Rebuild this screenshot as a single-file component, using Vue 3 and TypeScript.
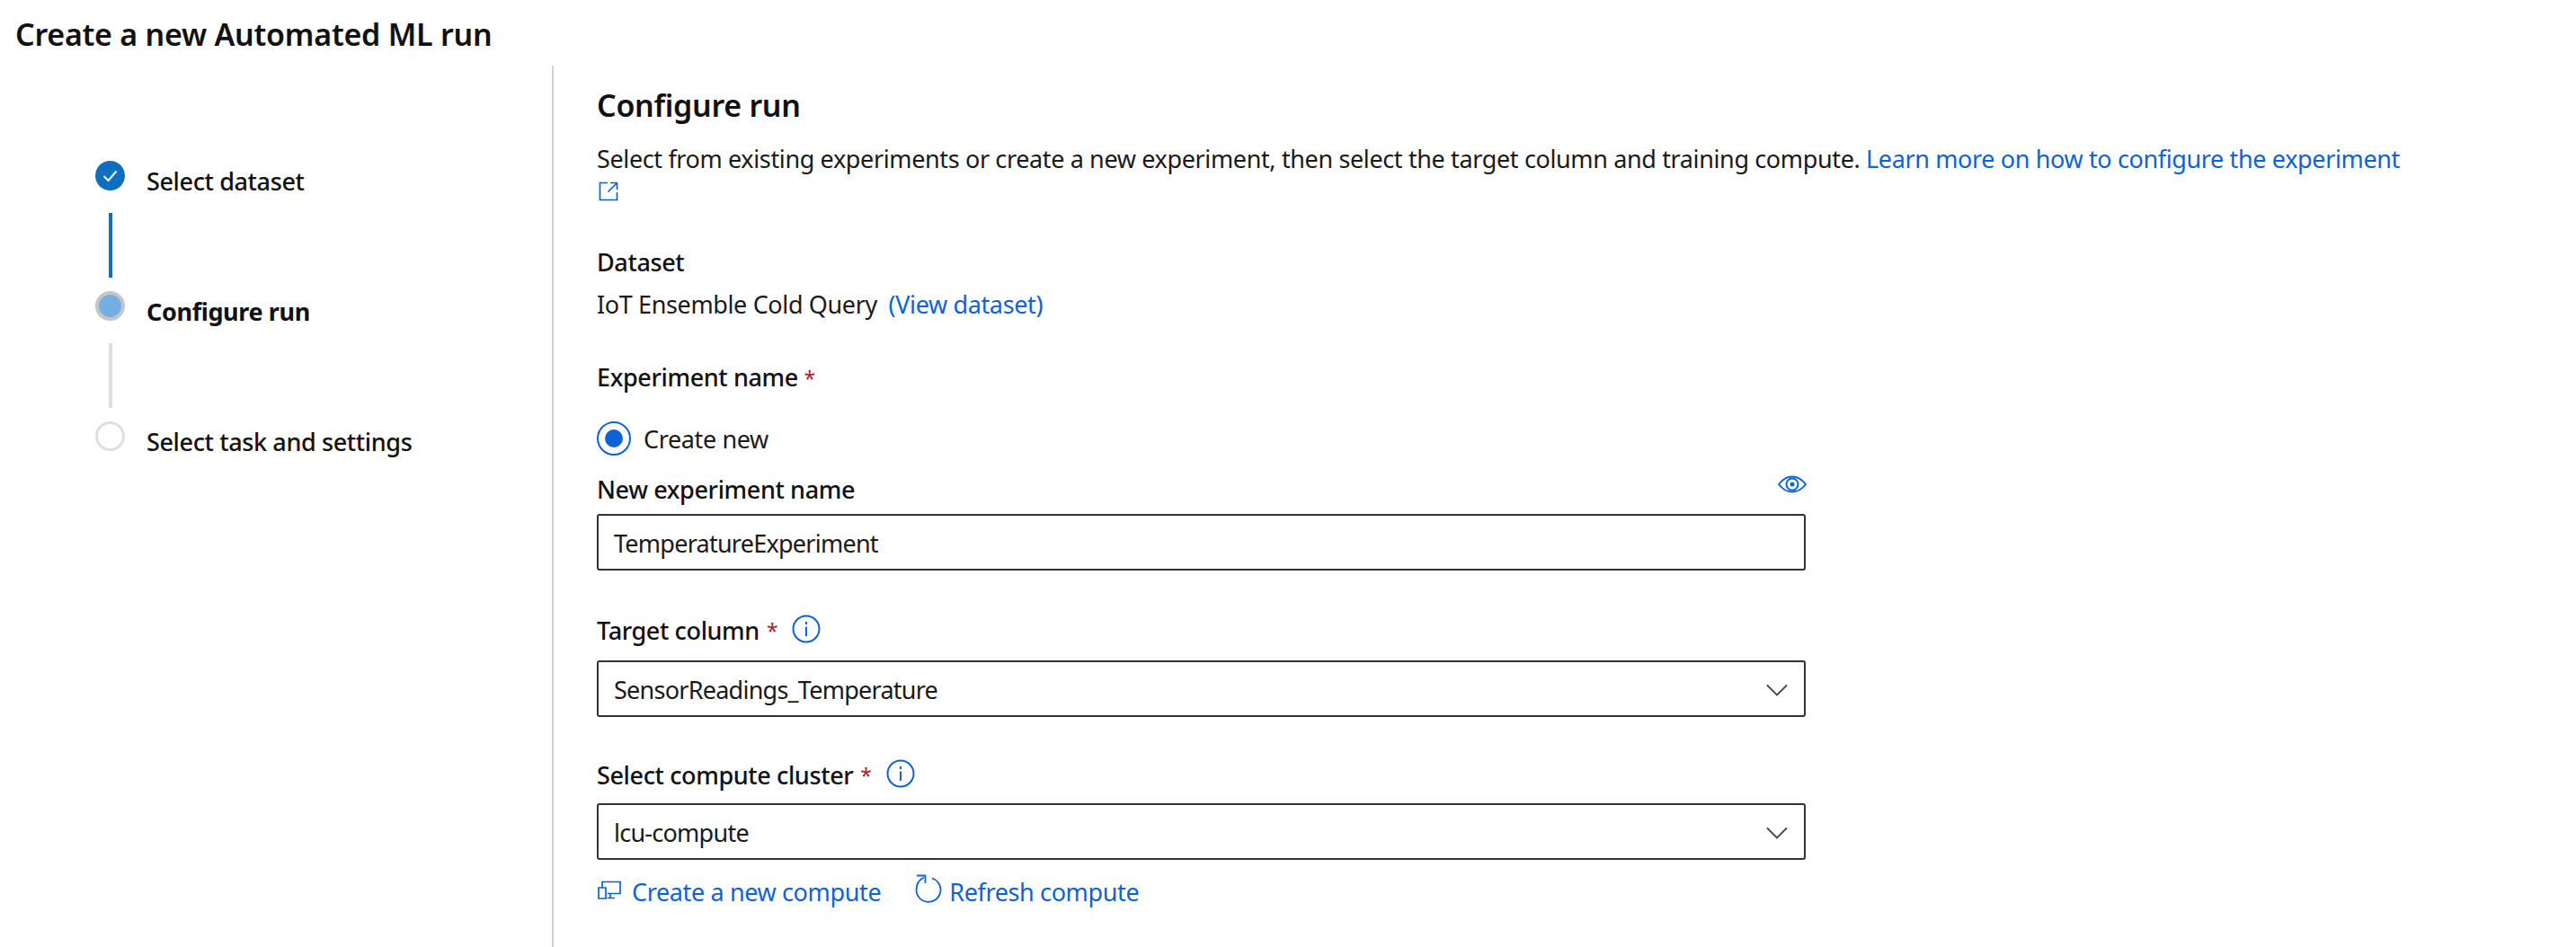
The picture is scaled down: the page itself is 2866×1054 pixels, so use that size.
<script setup lang="ts">
interface Step { label: string; state: 'done' | 'current' | 'todo' }
const steps: Step[] = [
  { label: 'Select dataset', state: 'done' },
  { label: 'Configure run', state: 'current' },
  { label: 'Select task and settings', state: 'todo' },
]
</script>

<template>
  <div class="page">
    <h1 class="title">Create a new Automated ML run</h1>
    <div class="body">
      <aside class="rail">
        <div v-for="(s, i) in steps" :key="s.label" class="step">
          <div class="marker">
            <span class="dot" :class="s.state">
              <svg v-if="s.state === 'done'" width="33" height="33" viewBox="0 0 33 33"><path d="M9.5 17l5 5 9-10.500" fill="none" stroke="#e4eef8" stroke-width="2.200"/></svg>
            </span>
            <span v-if="i < steps.length - 1" class="conn" :class="{ on: s.state === 'done' }"></span>
          </div>
          <span class="step-label" :class="{ strong: s.state === 'current' }">{{ s.label }}</span>
        </div>
      </aside>
      <main class="main">
        <h2 class="heading">Configure run</h2>
        <p class="desc">Select from existing experiments or create a new experiment, then select the target column and training compute. <a class="link">Learn more on how to configure the experiment</a>
          <svg class="ext" width="22" height="22" viewBox="0 0 22 22"><path d="M10 1.500H1.500v19h19V12M13 1.500h7.500v7.500M20.500 1.500L10.500 11.500" fill="none" stroke="#0f62d6" stroke-width="1.700"/></svg>
        </p>
        <div class="label dataset">Dataset</div>
        <div class="value">IoT Ensemble Cold Query <a class="link view">(View dataset)</a></div>
        <div class="label expname">Experiment name <span class="req">*</span></div>
        <div class="radio-row">
          <span class="radio"><span class="radio-in"></span></span>
          <span>Create new</span>
        </div>
        <div class="newname">
          <span class="label">New experiment name</span>
          <svg class="eye" width="32" height="20" viewBox="0 0 32 20"><path d="M1 10C6 3.500 11 1.500 16 1.500S26 3.500 31 10C26 16.500 21 18.500 16 18.500S6 16.500 1 10Z" fill="none" stroke="#0f62d6" stroke-width="2"/><circle cx="16" cy="10" r="6.500" fill="none" stroke="#0f62d6" stroke-width="2"/><circle cx="16" cy="10" r="2.500" fill="#0f62d6"/></svg>
        </div>
        <div class="field">TemperatureExperiment</div>
        <div class="label with-info gap1">Target column <span class="req">*</span>
          <svg class="info" width="32" height="32" viewBox="0 0 32 32"><circle cx="16" cy="16" r="14.500" fill="none" stroke="#0f62d6" stroke-width="2"/><path d="M16 13.500V24M16 8v3" stroke="#0f62d6" stroke-width="2"/></svg>
        </div>
        <div class="field select tall">SensorReadings_Temperature
          <svg class="chev" width="24" height="14" viewBox="0 0 24 14"><path d="M1 1.500l11 11 11-11" fill="none" stroke="#444" stroke-width="1.800"/></svg>
        </div>
        <div class="label with-info gap2">Select compute cluster <span class="req">*</span>
          <svg class="info" width="32" height="32" viewBox="0 0 32 32"><circle cx="16" cy="16" r="14.500" fill="none" stroke="#0f62d6" stroke-width="2"/><path d="M16 13.500V24M16 8v3" stroke="#0f62d6" stroke-width="2"/></svg>
        </div>
        <div class="field select">lcu-compute
          <svg class="chev" width="24" height="14" viewBox="0 0 24 14"><path d="M1 1.500l11 11 11-11" fill="none" stroke="#444" stroke-width="1.800"/></svg>
        </div>
        <div class="links">
          <a class="link action create">
            <svg width="26" height="22" viewBox="0 0 26 22"><path d="M5 8V1.500h20v13H11M1 8h8v12H1zM14 15v4M10.500 19.500H19" fill="none" stroke="#0f62d6" stroke-width="1.700"/></svg>
            Create a new compute
          </a>
          <a class="link action refresh">
            <svg width="30" height="32" viewBox="0 0 30 32"><path d="M10 3.500C4.500 6 1.500 11.500 1.500 17.500A13.500 13.500 0 1 0 19 4.500M2 1.500h9.500v8.500" fill="none" stroke="#0f62d6" stroke-width="1.800"/></svg>
            Refresh compute
          </a>
        </div>
      </main>
    </div>
  </div>
</template>

<style>
html, body { margin: 0; background: #fff; }
</style>

<style scoped>
.page {
  width: 2866px;
  height: 1054px;
  overflow: hidden;
  font-family: "Noto Sans", "Open Sans", sans-serif;
  font-size: 27px;
  letter-spacing: -0.37px;
  color: #1b1a19;
  background: #fff;
}
.title {
  margin: 0;
  height: 73px;
  padding-left: 17px;
  box-sizing: border-box;
  font-size: 34px;
  line-height: 76px;
  font-weight: 600;
  letter-spacing: -0.25px;
  color: #111;
}
.body { display: flex; height: 981px; }
.rail {
  width: 616px;
  flex: none;
  box-sizing: border-box;
  border-right: 2px solid #d0d0d0;
  padding: 106px 0 0 106px;
}
.step { display: flex; gap: 24px; height: 145px; }
.marker { width: 33px; display: flex; flex-direction: column; align-items: center; }
.dot { width: 33px; height: 33px; border-radius: 50%; box-sizing: border-box; flex: none; }
.dot.done { background: #106ebe; }
.dot.current { background: #71afe5; border: 4px solid #c8c6c4; }
.dot.todo { background: #fff; border: 3px solid #e1dfdd; }
.conn { width: 4px; height: 72px; margin-top: 25px; background: #e1dfdd; }
.conn.on { background: #106ebe; }
.step-label { font-weight: 500; line-height: 36px; margin-top: 5px; color: #111; }
.step-label.strong { font-weight: 700; }
.main { padding: 23px 0 0 48px; width: 2200px; flex: none; box-sizing: border-box; }
.heading { margin: 0; font-size: 34px; line-height: 42px; font-weight: 600; letter-spacing: -0.3px; color: #111; }
.desc { margin: 20px 0 0; line-height: 37px; }
.ext { display: block; margin: 7px 0 0 2px; }
.link { color: #0f62d6; }
.label { font-weight: 500; color: #111; line-height: 36px; }
.dataset { margin-top: 50px; }
.value { margin-top: 11px; line-height: 36px; }
.view { margin-left: 6px; }
.expname { margin-top: 45px; }
.req { color: #a4262c; font-weight: 400; font-size: 23px; }
.radio-row { display: flex; align-items: center; gap: 14px; margin-top: 30px; height: 38px; }
.radio { width: 38px; height: 38px; box-sizing: border-box; border: 2.500px solid #0f62d6; border-radius: 50%; display: flex; align-items: center; justify-content: center; }
.radio-in { width: 20px; height: 20px; border-radius: 50%; background: #0f62d6; }
.newname { width: 1345px; display: flex; justify-content: space-between; align-items: flex-start; margin-top: 18px; height: 47px; }
.newname .label { margin-top: 2px; }
.eye { margin-top: 4px; position: relative; left: 1px; }
.field {
  width: 1345px;
  height: 63px;
  box-sizing: border-box;
  border: 2px solid #333;
  border-radius: 3px;
  padding: 2px 18px 0 17px;
  display: flex;
  align-items: center;
  justify-content: space-between;
  letter-spacing: -0.75px;
  color: #1b1a19;
}
.with-info { display: flex; align-items: center; gap: 8px; height: 36px; }
.gap1 { margin-top: 49px; }
.gap2 { margin-top: 47px; }
.with-info + .field { margin-top: 13px; }
.with-info + .field.tall { margin-top: 15px; }
.info { margin-left: 8px; margin-top: -4px; }
.links { display: flex; gap: 38px; margin-top: 18px; }
.action { display: flex; align-items: center; gap: 12px; line-height: 36px; }
.create svg { margin: -4px 0 0 1px; }
.refresh { gap: 8px; }
.refresh svg { margin-top: -8px; }
</style>
